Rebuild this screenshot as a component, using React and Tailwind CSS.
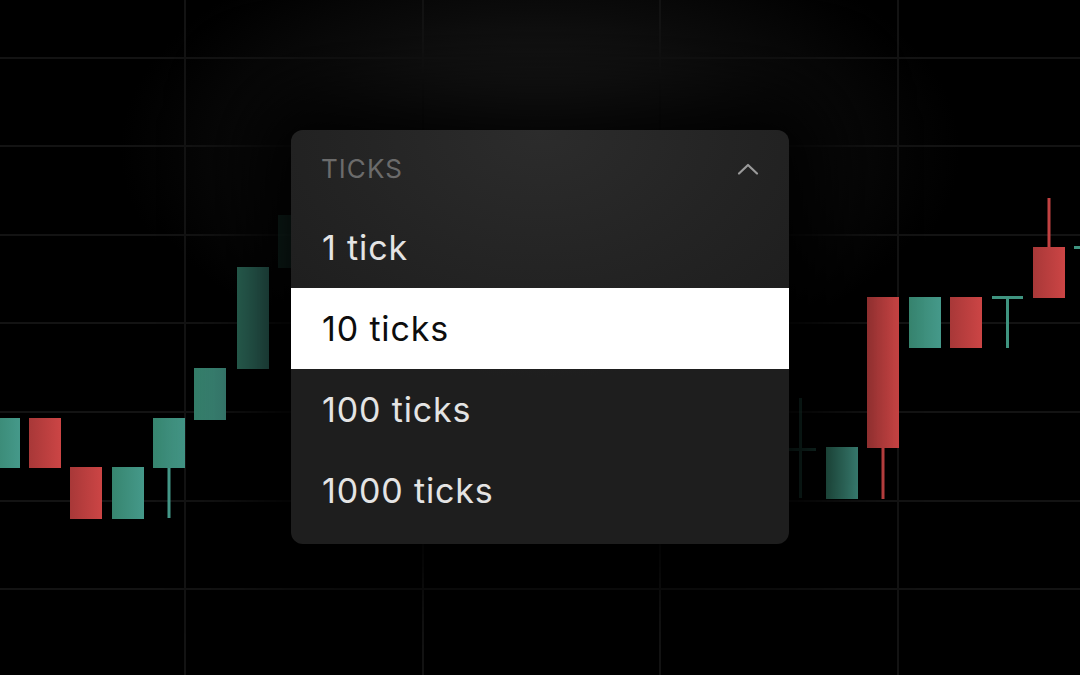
import React from "react";

const GREEN = "url(#gGreen)";
const RED = "url(#gRed)";

const candles = [
  { x: -12, y: 418, h: 50, c: "g" },
  { x: 29, y: 418, h: 50, c: "r" },
  { x: 70, y: 467, h: 52, c: "r" },
  { x: 112, y: 467, h: 52, c: "g" },
  { x: 153, y: 418, h: 50, c: "g", wick: [468, 518] },
  { x: 194, y: 368, h: 52, c: "g" },
  { x: 237, y: 267, h: 102, c: "g" },
  { x: 278, y: 215, h: 53, c: "g", o: 0.45 },
  { x: 826, y: 447, h: 52, c: "g" },
  { x: 867, y: 297, h: 151, c: "r", wick: [448, 499] },
  { x: 909, y: 297, h: 51, c: "g" },
  { x: 950, y: 297, h: 51, c: "r" },
  { x: 1033, y: 247, h: 51, c: "r", wick: [198, 247] },
];

const dojis = [
  { x: 785, y: 448, top: 398, bottom: 498, c: "#3f9480", o: 0.5 },
  { x: 992, y: 296, top: 296, bottom: 348, c: "#3f9480", o: 1 },
  { x: 1074, y: 246, top: 246, bottom: 300, c: "#3f9480", o: 1 },
];

const vLines = [185, 423, 660, 898];
const hLines = [58, 146, 235, 323, 412, 501, 589];

function Chart() {
  return (
    <svg className="absolute inset-0" width="1080" height="675" viewBox="0 0 1080 675">
      <defs>
        <linearGradient id="gGreen" x1="0" x2="1" y1="0" y2="0">
          <stop offset="0" stopColor="#37856f" />
          <stop offset="1" stopColor="#45998a" />
        </linearGradient>
        <linearGradient id="gRed" x1="0" x2="1" y1="0" y2="0">
          <stop offset="0" stopColor="#a83838" />
          <stop offset="1" stopColor="#cc4545" />
        </linearGradient>
        <radialGradient id="glow" cx="540" cy="150" r="420" gradientUnits="userSpaceOnUse" gradientTransform="translate(540 150) scale(1 0.55) translate(-540 -150)">
          <stop offset="0" stopColor="#242424" />
          <stop offset="0.6" stopColor="#0c0c0c" />
          <stop offset="1" stopColor="#000000" />
        </radialGradient>
      </defs>
      <rect x="0" y="0" width="1080" height="675" fill="#000" />
      <rect x="0" y="0" width="1080" height="675" fill="url(#glow)" />
      {vLines.map((x) => (
        <rect key={"v" + x} x={x - 1} y="0" width="2" height="675" fill="#131313" />
      ))}
      {hLines.map((y) => (
        <rect key={"h" + y} x="0" y={y - 1} width="1080" height="2" fill="#131313" />
      ))}
      {candles.map((k, i) => (
        <g key={i} opacity={k.o ?? 1}>
          {k.wick && (
            <rect
              x={k.x + 14.5}
              y={k.wick[0]}
              width="3"
              height={k.wick[1] - k.wick[0]}
              fill={k.c === "g" ? "#45998a" : "#c24242"}
            />
          )}
          <rect x={k.x} y={k.y} width="32" height={k.h} fill={k.c === "g" ? GREEN : RED} />
        </g>
      ))}
      {dojis.map((d, i) => (
        <g key={"d" + i} fill={d.c} opacity={d.o}>
          <rect x={d.x} y={d.y} width="31" height="3" />
          <rect x={d.x + 14} y={d.top} width="3" height={d.bottom - d.top} />
        </g>
      ))}
    </svg>
  );
}

function Chevron() {
  return (
    <svg width="22" height="14" viewBox="0 0 22 14" fill="none">
      <polyline
        points="2,11.5 11,3 20,11.5"
        stroke="#9a9a9a"
        strokeWidth="2.2"
        strokeLinecap="round"
        strokeLinejoin="round"
      />
    </svg>
  );
}

const options = ["1 tick", "10 ticks", "100 ticks", "1000 ticks"];

export default function App() {
  return (
    <div
      className="relative w-[1080px] h-[675px] overflow-hidden bg-black"
      style={{ fontFamily: "Inter, 'Noto Sans', sans-serif" }}
    >
      <Chart />
      <div className="relative flex justify-center pt-[130px]">
        <div className="w-[498px] rounded-xl overflow-hidden pb-[13px] bg-[radial-gradient(ellipse_70%_60%_at_50%_0%,#2c2c2c_0%,#242424_55%,#1e1e1e_100%)] shadow-[0_0_80px_40px_rgba(0,0,0,0.95)]">
          <div className="h-[77px] flex items-center justify-between pl-[30px] pr-[30px]">
            <span className="text-[26px] tracking-[0.04em] text-[#6b6b6b] leading-none">TICKS</span>
            <Chevron />
          </div>
          {options.map((o, i) => {
            const sel = i === 1;
            return (
              <div
                key={o}
                className={
                  sel
                    ? "h-[81px] flex items-center pl-[31px] bg-white text-[#0d0d0d]"
                    : "h-[81px] flex items-center pl-[31px] text-[#e4e4e4]"
                }
              >
                <span className="text-[34px] leading-none tracking-[0.025em]">{o}</span>
              </div>
            );
          })}
        </div>
      </div>
    </div>
  );
}
